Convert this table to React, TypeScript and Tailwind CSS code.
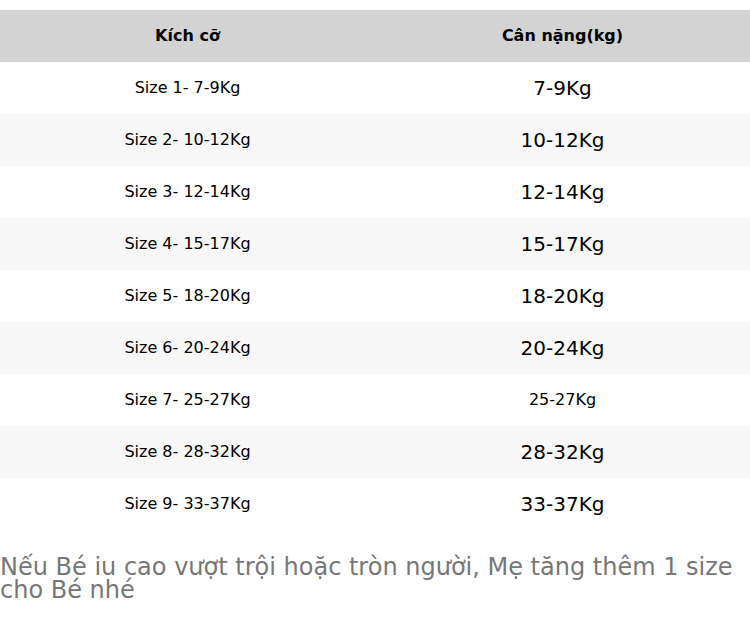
const rows = [
  { size: 'Size 1- 7-9Kg', weight: '7-9Kg', big: true },
  { size: 'Size 2- 10-12Kg', weight: '10-12Kg', big: true },
  { size: 'Size 3- 12-14Kg', weight: '12-14Kg', big: true },
  { size: 'Size 4- 15-17Kg', weight: '15-17Kg', big: true },
  { size: 'Size 5- 18-20Kg', weight: '18-20Kg', big: true },
  { size: 'Size 6- 20-24Kg', weight: '20-24Kg', big: true },
  { size: 'Size 7- 25-27Kg', weight: '25-27Kg', big: false },
  { size: 'Size 8- 28-32Kg', weight: '28-32Kg', big: true },
  { size: 'Size 9- 33-37Kg', weight: '33-37Kg', big: true },
];

export default function App() {
  return (
    <div className="w-[750px] min-h-[626px] bg-white pt-[10px] font-['DejaVu_Sans',sans-serif] text-black">
      <div className="grid grid-cols-2 h-[52px] bg-[#d3d3d3] items-center text-center text-[16px] font-bold">
        <div>Kích cỡ</div>
        <div>Cân nặng(kg)</div>
      </div>
      {rows.map((r, i) => (
        <div
          key={r.size}
          className={`grid grid-cols-2 h-[52px] items-center text-center ${i % 2 === 1 ? 'bg-[#f7f7f7]' : 'bg-white'}`}
        >
          <div className="text-[16px]">{r.size}</div>
          <div className={r.big ? 'text-[20px]' : 'text-[16px]'}>{r.weight}</div>
        </div>
      ))}
      <p className="mt-[26px] text-[24px] leading-[23px] text-[#777777]">
        Nếu Bé iu cao vượt trội hoặc tròn người, Mẹ tăng thêm 1 size cho Bé nhé
      </p>
    </div>
  );
}
